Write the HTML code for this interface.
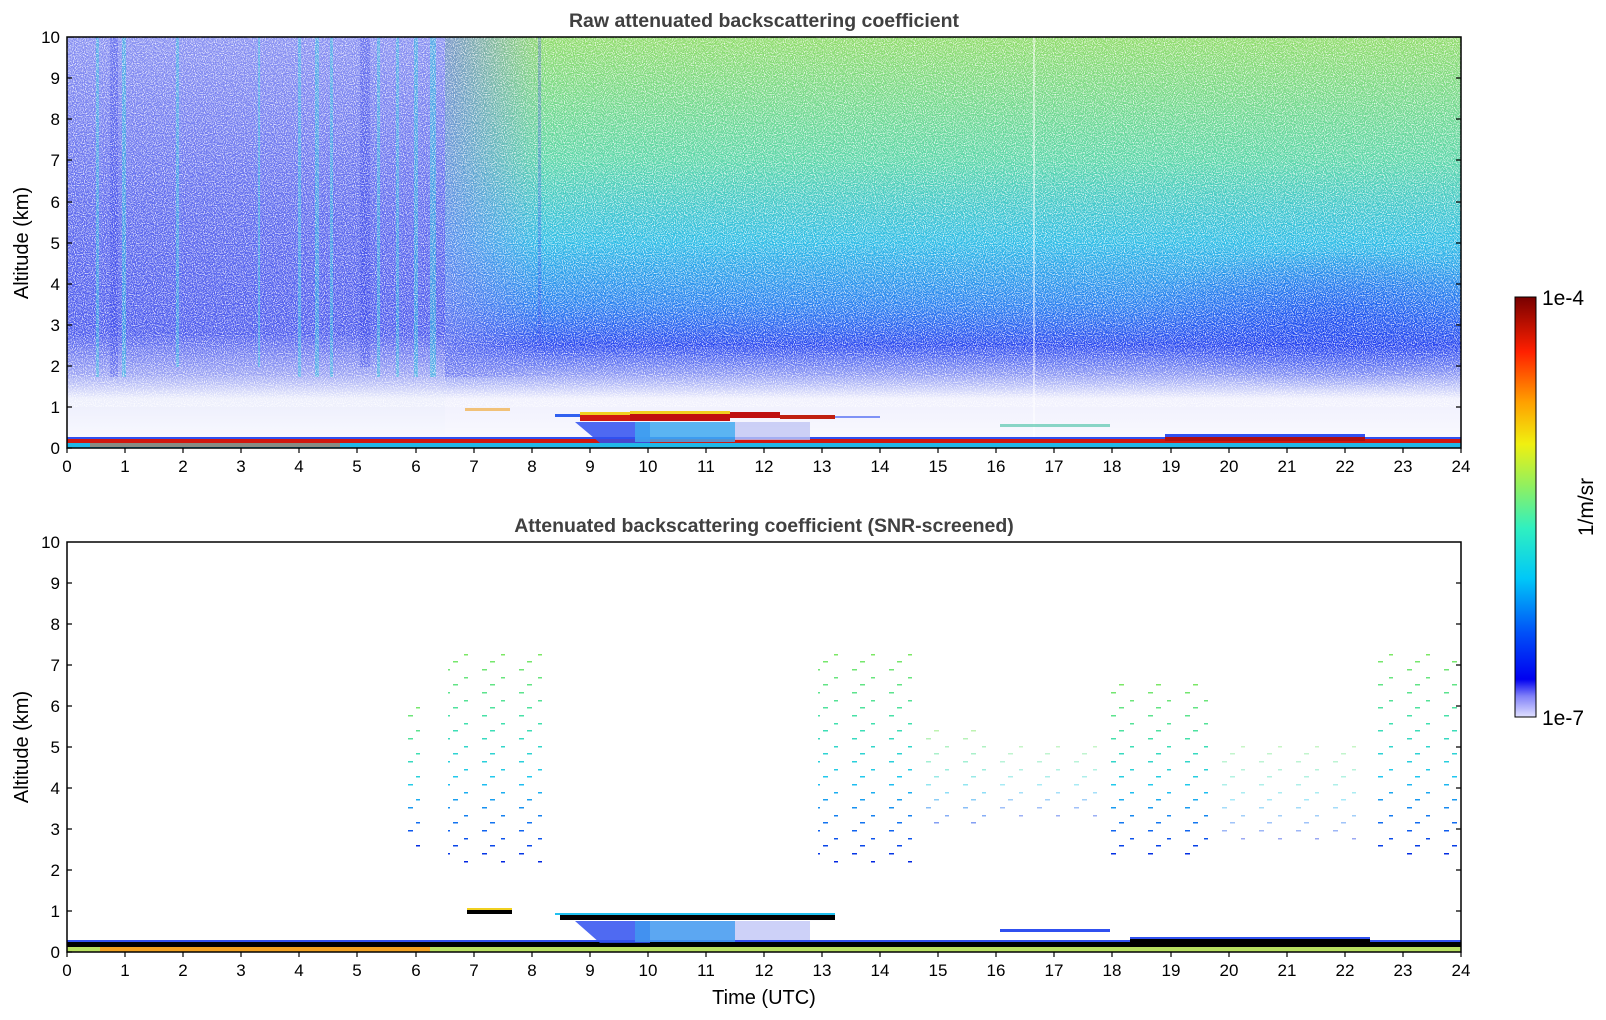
<!DOCTYPE html>
<html><head><meta charset="utf-8"><style>
html,body{margin:0;padding:0;background:#fff;}
svg{display:block;font-family:"Liberation Sans","DejaVu Sans",sans-serif;}
</style></head><body>
<svg width="1606" height="1020" viewBox="0 0 1606 1020" xmlns="http://www.w3.org/2000/svg">
<defs>
<clipPath id="cp"><rect x="67" y="37" width="1394" height="411"/></clipPath>
<linearGradient id="gL" x1="0" y1="0" x2="0" y2="1">
<stop offset="0" stop-color="#8890f2"/><stop offset="0.45" stop-color="#5c68ee"/><stop offset="0.72" stop-color="#4c5aee"/><stop offset="0.82" stop-color="#9aa2f4"/><stop offset="0.88" stop-color="#eceefc"/><stop offset="1" stop-color="#fbfbff"/>
</linearGradient>
<linearGradient id="gR" x1="0" y1="0" x2="0" y2="1">
<stop offset="0" stop-color="#90dc6a"/><stop offset="0.3" stop-color="#5ad6a8"/><stop offset="0.5" stop-color="#2cbce6"/><stop offset="0.65" stop-color="#2880f0"/><stop offset="0.75" stop-color="#2a48f0"/><stop offset="0.82" stop-color="#8a96f4"/><stop offset="0.88" stop-color="#f0f0fd"/><stop offset="1" stop-color="#fbfbff"/>
</linearGradient>
<linearGradient id="gT" x1="0" y1="0" x2="1" y2="0">
<stop offset="0" stop-color="#6a76f0" stop-opacity="0.7"/><stop offset="1" stop-color="#6a76f0" stop-opacity="0"/>
</linearGradient>
<radialGradient id="gY" cx="0.5" cy="0" r="0.5">
<stop offset="0" stop-color="#f4e030" stop-opacity="0.9"/><stop offset="0.6" stop-color="#d8e040" stop-opacity="0.45"/><stop offset="1" stop-color="#c8e060" stop-opacity="0"/>
</radialGradient>
<radialGradient id="gB" cx="0.5" cy="0.5" r="0.5">
<stop offset="0" stop-color="#1030f0" stop-opacity="0.5"/><stop offset="1" stop-color="#1030f0" stop-opacity="0"/>
</radialGradient>
<linearGradient id="gS" x1="0" y1="0" x2="0" y2="1">
<stop offset="0" stop-color="#80e860"/><stop offset="0.35" stop-color="#40e0b0"/><stop offset="0.6" stop-color="#20c8f0"/><stop offset="0.85" stop-color="#1060f0"/><stop offset="1" stop-color="#0020e0"/>
</linearGradient>
<linearGradient id="cb" x1="0" y1="1" x2="0" y2="0">
<stop offset="0" stop-color="#e0e0ff"/><stop offset="0.05" stop-color="#8080f8"/><stop offset="0.09" stop-color="#0000f0"/><stop offset="0.2" stop-color="#0050f8"/><stop offset="0.33" stop-color="#00c8f8"/><stop offset="0.45" stop-color="#30f0c0"/><stop offset="0.55" stop-color="#90f060"/><stop offset="0.65" stop-color="#f0f010"/><stop offset="0.75" stop-color="#ffa000"/><stop offset="0.87" stop-color="#ff2000"/><stop offset="1" stop-color="#780000"/>
</linearGradient>
<filter id="nz" x="0" y="0" width="100%" height="100%">
<feTurbulence type="fractalNoise" baseFrequency="0.9" numOctaves="1" seed="3"/>
<feColorMatrix values="0 0 0 0 1  0 0 0 0 1  0 0 0 0 1  0 0 0 4 -1.8"/>
</filter>
<pattern id="dash" width="37" height="23" patternUnits="userSpaceOnUse">
<rect x="1" y="2" width="5" height="1.5" fill="#fff"/><rect x="20" y="10" width="4" height="1.5" fill="#fff"/><rect x="9" y="17" width="5" height="1.5" fill="#fff"/>
</pattern>
<mask id="mk"><rect x="0" y="0" width="1606" height="1020" fill="url(#dash)"/></mask>
</defs>

<!-- TOP PANEL -->
<text x="764" y="27" text-anchor="middle" font-size="19.5" font-weight="bold" fill="#404040">Raw attenuated backscattering coefficient</text>
<g clip-path="url(#cp)">
<rect x="67" y="37" width="378" height="411" fill="url(#gL)"/>
<rect x="445" y="37" width="1016" height="411" fill="url(#gR)"/>
<rect x="445" y="37" width="100" height="340" fill="url(#gT)"/>
<ellipse cx="690" cy="37" rx="330" ry="280" fill="url(#gY)"/>
<ellipse cx="1330" cy="320" rx="200" ry="70" fill="url(#gB)"/>
<g fill="#30c0e0" opacity="0.55">
<rect x="96" y="37" width="3" height="340"/><rect x="122" y="37" width="4" height="340"/><rect x="176" y="37" width="3" height="330"/><rect x="258" y="37" width="2" height="330"/>
<rect x="298" y="37" width="3" height="340"/><rect x="315" y="37" width="4" height="340"/><rect x="330" y="37" width="3" height="340"/><rect x="377" y="37" width="3" height="340"/><rect x="396" y="37" width="3" height="340"/><rect x="414" y="37" width="4" height="340"/><rect x="430" y="37" width="6" height="340"/>
</g>
<g fill="#2030e8" opacity="0.3"><rect x="110" y="37" width="8" height="340"/><rect x="538" y="37" width="3" height="310"/><rect x="360" y="37" width="10" height="330"/></g>
<rect x="1033" y="37" width="2" height="400" fill="#fff" opacity="0.5"/>
<rect x="67" y="37" width="1394" height="370" filter="url(#nz)" opacity="0.8"/>
</g>
<!-- ground -->
<rect x="67" y="437" width="1394" height="2" fill="#3050f0"/>
<rect x="67" y="439" width="1394" height="4" fill="#d01810"/>
<rect x="67" y="443" width="1394" height="5" fill="#20b8e8"/>
<rect x="1165" y="434" width="200" height="3" fill="#3050f0"/><rect x="1165" y="437" width="200" height="4" fill="#b01010"/>
<rect x="90" y="443" width="250" height="4" fill="#f06020" opacity="0.5"/>
<!-- cloud -->
<polygon points="575,422 650,422 650,443 600,443" fill="#3050f0" opacity="0.85"/>
<rect x="635" y="422" width="100" height="20" fill="#40a8f0" opacity="0.85"/>
<rect x="735" y="422" width="75" height="18" fill="#c0c6f4" opacity="0.8"/>
<rect x="555" y="414" width="30" height="3" fill="#3060f0"/>
<rect x="580" y="415" width="100" height="6" fill="#d01810"/><rect x="580" y="412" width="100" height="3" fill="#f0d020"/>
<rect x="630" y="414" width="100" height="7" fill="#c01010"/><rect x="630" y="411" width="100" height="3" fill="#f0d020"/>
<rect x="730" y="412" width="50" height="6" fill="#c01010"/><rect x="780" y="415" width="55" height="4" fill="#c02010"/>
<rect x="835" y="416" width="45" height="2" fill="#3050f0" opacity="0.6"/>
<rect x="465" y="408" width="45" height="3" fill="#f0a020" opacity="0.6"/>
<rect x="1000" y="424" width="110" height="3" fill="#40c0a0" opacity="0.6"/>
<rect x="67" y="37" width="1394" height="411" fill="none" stroke="#000" stroke-width="1.5"/>

<!-- BOTTOM PANEL -->
<text x="764" y="532" text-anchor="middle" font-size="19.5" font-weight="bold" fill="#404040">Attenuated backscattering coefficient (SNR-screened)</text>
<g mask="url(#mk)">
<rect x="448" y="650" width="100" height="215" fill="url(#gS)"/>
<rect x="408" y="700" width="12" height="150" fill="url(#gS)"/>
<rect x="818" y="650" width="100" height="215" fill="url(#gS)"/>
<rect x="918" y="730" width="70" height="100" fill="url(#gS)" opacity="0.5"/>
<rect x="990" y="740" width="120" height="80" fill="url(#gS)" opacity="0.4"/>
<rect x="1100" y="680" width="110" height="180" fill="url(#gS)"/>
<rect x="1210" y="740" width="160" height="100" fill="url(#gS)" opacity="0.4"/>
<rect x="1375" y="650" width="86" height="210" fill="url(#gS)"/>
</g>
<!-- ground bottom -->
<rect x="67" y="940" width="1394" height="2" fill="#3050f0"/>
<rect x="67" y="942" width="1394" height="5" fill="#000"/>
<rect x="67" y="947" width="1394" height="5" fill="#b8e060"/>
<rect x="100" y="947" width="330" height="5" fill="#f0a020"/>
<rect x="1130" y="937" width="240" height="2" fill="#3050f0"/><rect x="1130" y="939" width="240" height="3" fill="#000"/>
<!-- cloud bottom -->
<polygon points="575,921 650,921 650,943 600,943" fill="#3050f0" opacity="0.85"/>
<rect x="635" y="921" width="100" height="21" fill="#4098f0" opacity="0.85"/>
<rect x="735" y="921" width="75" height="19" fill="#c0c6f6" opacity="0.8"/>
<rect x="555" y="913" width="280" height="2" fill="#20c0f0"/>
<rect x="560" y="915" width="275" height="5" fill="#000"/>
<rect x="467" y="910" width="45" height="4" fill="#000"/><rect x="467" y="908" width="45" height="2" fill="#f0d020"/>
<rect x="1000" y="929" width="110" height="3" fill="#3050f0"/>
<rect x="67" y="542" width="1394" height="410" fill="none" stroke="#000" stroke-width="1.5"/>

<!-- ticks -->
<g stroke="#000" stroke-width="1.2">
<path d="M67,448h5M67,407h5M67,366h5M67,325h5M67,284h5M67,243h5M67,202h5M67,160h5M67,119h5M67,78h5M1461,407h-5M1461,366h-5M1461,325h-5M1461,284h-5M1461,243h-5M1461,202h-5M1461,160h-5M1461,119h-5M1461,78h-5"/>
<path d="M67,952h5M67,911h5M67,870h5M67,829h5M67,788h5M67,747h5M67,706h5M67,665h5M67,624h5M67,583h5M1461,911h-5M1461,870h-5M1461,829h-5M1461,788h-5M1461,747h-5M1461,706h-5M1461,665h-5M1461,624h-5M1461,583h-5"/>
<path d="M67,448v5M125,448v5M183,448v5M241,448v5M299,448v5M357,448v5M416,448v5M474,448v5M532,448v5M590,448v5M648,448v5M706,448v5M764,448v5M822,448v5M880,448v5M938,448v5M996,448v5M1054,448v5M1112,448v5M1171,448v5M1229,448v5M1287,448v5M1345,448v5M1403,448v5M1461,448v5"/>
<path d="M67,952v5M125,952v5M183,952v5M241,952v5M299,952v5M357,952v5M416,952v5M474,952v5M532,952v5M590,952v5M648,952v5M706,952v5M764,952v5M822,952v5M880,952v5M938,952v5M996,952v5M1054,952v5M1112,952v5M1171,952v5M1229,952v5M1287,952v5M1345,952v5M1403,952v5M1461,952v5"/>
</g>
<g font-size="17" fill="#000" text-anchor="end">
<text x="60" y="454">0</text><text x="60" y="413">1</text><text x="60" y="372">2</text><text x="60" y="331">3</text><text x="60" y="290">4</text><text x="60" y="249">5</text><text x="60" y="208">6</text><text x="60" y="166">7</text><text x="60" y="125">8</text><text x="60" y="84">9</text><text x="60" y="43">10</text>
<text x="60" y="958">0</text><text x="60" y="917">1</text><text x="60" y="876">2</text><text x="60" y="835">3</text><text x="60" y="794">4</text><text x="60" y="753">5</text><text x="60" y="712">6</text><text x="60" y="671">7</text><text x="60" y="630">8</text><text x="60" y="589">9</text><text x="60" y="548">10</text>
</g>
<g font-size="17" fill="#000" text-anchor="middle">
<text x="67" y="472">0</text><text x="125" y="472">1</text><text x="183" y="472">2</text><text x="241" y="472">3</text><text x="299" y="472">4</text><text x="357" y="472">5</text><text x="416" y="472">6</text><text x="474" y="472">7</text><text x="532" y="472">8</text><text x="590" y="472">9</text><text x="648" y="472">10</text><text x="706" y="472">11</text><text x="764" y="472">12</text><text x="822" y="472">13</text><text x="880" y="472">14</text><text x="938" y="472">15</text><text x="996" y="472">16</text><text x="1054" y="472">17</text><text x="1112" y="472">18</text><text x="1171" y="472">19</text><text x="1229" y="472">20</text><text x="1287" y="472">21</text><text x="1345" y="472">22</text><text x="1403" y="472">23</text><text x="1461" y="472">24</text>
<text x="67" y="976">0</text><text x="125" y="976">1</text><text x="183" y="976">2</text><text x="241" y="976">3</text><text x="299" y="976">4</text><text x="357" y="976">5</text><text x="416" y="976">6</text><text x="474" y="976">7</text><text x="532" y="976">8</text><text x="590" y="976">9</text><text x="648" y="976">10</text><text x="706" y="976">11</text><text x="764" y="976">12</text><text x="822" y="976">13</text><text x="880" y="976">14</text><text x="938" y="976">15</text><text x="996" y="976">16</text><text x="1054" y="976">17</text><text x="1112" y="976">18</text><text x="1171" y="976">19</text><text x="1229" y="976">20</text><text x="1287" y="976">21</text><text x="1345" y="976">22</text><text x="1403" y="976">23</text><text x="1461" y="976">24</text>
</g>
<text x="764" y="1004" text-anchor="middle" font-size="20" fill="#000">Time (UTC)</text>
<text transform="translate(28,243) rotate(-90)" text-anchor="middle" font-size="20" fill="#000">Altitude (km)</text>
<text transform="translate(28,747) rotate(-90)" text-anchor="middle" font-size="20" fill="#000">Altitude (km)</text>

<!-- colorbar -->
<rect x="1515" y="297" width="21" height="420" fill="url(#cb)" stroke="#000" stroke-width="1"/>
<text x="1542" y="305" font-size="21" fill="#000">1e-4</text>
<text x="1542" y="725" font-size="21" fill="#000">1e-7</text>
<text transform="translate(1593,507) rotate(-90)" text-anchor="middle" font-size="21" fill="#000">1/m/sr</text>
</svg>
</body></html>
